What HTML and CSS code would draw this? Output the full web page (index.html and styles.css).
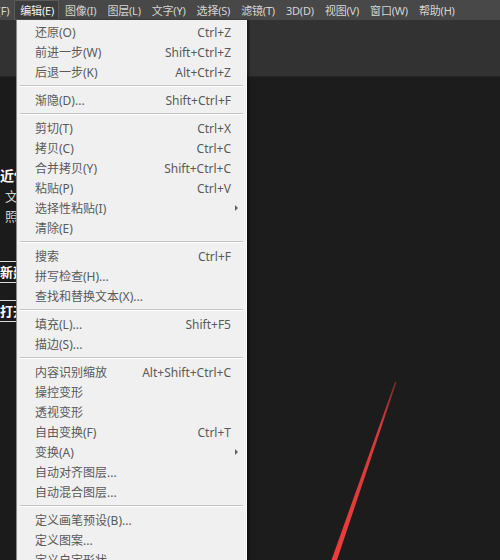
FILE: index.html
```html
<!DOCTYPE html>
<html lang="zh">
<head>
<meta charset="utf-8">
<link rel="stylesheet" href="styles.css">
</head>
<body>
<div class="app">
  <div class="menubar">
    <span class="mb-item cut">文件(F)</span>
    <span class="mb-item active">编辑(E)</span>
    <span class="mb-item">图像(I)</span>
    <span class="mb-item">图层(L)</span>
    <span class="mb-item">文字(Y)</span>
    <span class="mb-item">选择(S)</span>
    <span class="mb-item">滤镜(T)</span>
    <span class="mb-item">3D(D)</span>
    <span class="mb-item">视图(V)</span>
    <span class="mb-item">窗口(W)</span>
    <span class="mb-item">帮助(H)</span>
  </div>
  <div class="optbar"></div>
  <div class="work">
    <aside class="start">
      <div class="title">最近使用项</div>
      <div class="row">：文档</div>
      <div class="row">：照片</div>
      <div class="btn btn-new">新建...</div>
      <div class="btn btn-open">打开...</div>
    </aside>
    <main class="canvas">
      <svg class="stroke" viewBox="0 0 484 483" width="484" height="483">
        <defs>
          <linearGradient id="rg" x1="0" y1="0" x2="0" y2="1">
            <stop offset="0" stop-color="#7a2a2a"/>
            <stop offset="0.25" stop-color="#d83a3a"/>
            <stop offset="1" stop-color="#ef3b3b"/>
          </linearGradient>
        </defs>
        <polygon points="379,305 380.5,305 321,483 315.5,483" fill="url(#rg)"/>
      </svg>
    </main>
  </div>

  <div class="menu">
    <div class="mi"><span>还原(O)</span><span class="sc">Ctrl+Z</span></div>
    <div class="mi"><span>前进一步(W)</span><span class="sc">Shift+Ctrl+Z</span></div>
    <div class="mi"><span>后退一步(K)</span><span class="sc">Alt+Ctrl+Z</span></div>
    <div class="sep"></div>
    <div class="mi"><span>渐隐(D)...</span><span class="sc">Shift+Ctrl+F</span></div>
    <div class="sep"></div>
    <div class="mi"><span>剪切(T)</span><span class="sc">Ctrl+X</span></div>
    <div class="mi"><span>拷贝(C)</span><span class="sc">Ctrl+C</span></div>
    <div class="mi"><span>合并拷贝(Y)</span><span class="sc">Shift+Ctrl+C</span></div>
    <div class="mi"><span>粘贴(P)</span><span class="sc">Ctrl+V</span></div>
    <div class="mi sub"><span>选择性粘贴(I)</span></div>
    <div class="mi"><span>清除(E)</span></div>
    <div class="sep"></div>
    <div class="mi"><span>搜索</span><span class="sc">Ctrl+F</span></div>
    <div class="mi"><span>拼写检查(H)...</span></div>
    <div class="mi"><span>查找和替换文本(X)...</span></div>
    <div class="sep"></div>
    <div class="mi"><span>填充(L)...</span><span class="sc">Shift+F5</span></div>
    <div class="mi"><span>描边(S)...</span></div>
    <div class="sep"></div>
    <div class="mi"><span>内容识别缩放</span><span class="sc">Alt+Shift+Ctrl+C</span></div>
    <div class="mi"><span>操控变形</span></div>
    <div class="mi"><span>透视变形</span></div>
    <div class="mi"><span>自由变换(F)</span><span class="sc">Ctrl+T</span></div>
    <div class="mi sub"><span>变换(A)</span></div>
    <div class="mi"><span>自动对齐图层...</span></div>
    <div class="mi"><span>自动混合图层...</span></div>
    <div class="sep"></div>
    <div class="mi"><span>定义画笔预设(B)...</span></div>
    <div class="mi"><span>定义图案...</span></div>
    <div class="mi"><span>定义自定形状...</span></div>
  </div>
</div>
</body>
</html>
```
FILE: styles.css
```css
html, body {
  margin: 0;
  padding: 0;
  background: #1c1c1c;
}
.app {
  position: relative;
  width: 500px;
  height: 560px;
  overflow: hidden;
  font-family: "Noto Sans", "Noto Sans CJK SC", sans-serif;
  display: flex;
  flex-direction: column;
}
.menubar {
  height: 20px;
  background: #484848;
  display: flex;
  align-items: stretch;
  margin-left: -30px;
  flex-shrink: 0;
}
.mb-item {
  display: flex;
  align-items: center;
  padding: 0 5px 0 6px;
  color: #d4d4d4;
  font-size: 11px;
  white-space: nowrap;
  letter-spacing: -0.2px;
}
.mb-item.active {
  background: #3c3c3c;
  color: #f2f2f2;
  box-shadow: inset 0 0 0 1px #5a5a5a;
}
.optbar {
  height: 56px;
  background: #323232;
  border-bottom: 1px solid #262626;
  flex-shrink: 0;
}
.work {
  flex: 1;
  display: flex;
  min-height: 0;
}
.start {
  width: 16px;
  flex-shrink: 0;
  background: #1b1b1b;
  overflow: hidden;
  white-space: nowrap;
  padding-top: 89px;
}
.title {
  color: #ffffff;
  font-weight: bold;
  font-size: 14px;
  line-height: 20px;
  margin-left: -14px;
}
.row {
  color: #d0d0d0;
  font-size: 13px;
  line-height: 20px;
  margin-left: -8px;
}
.btn {
  box-sizing: border-box;
  width: 80px;
  height: 22px;
  border: 1px solid #d8d8d8;
  color: #ffffff;
  font-size: 13px;
  font-weight: bold;
  line-height: 20px;
  margin-left: -1px;
  background: #1b1b1b;
}
.btn-new { margin-top: 35px; }
.btn-open { margin-top: 17px; }
.canvas {
  flex: 1;
  position: relative;
  background: #1c1c1c;
}
.stroke {
  position: absolute;
  left: 0;
  top: 0;
  display: block;
}
.menu {
  position: absolute;
  left: 16px;
  top: 20px;
  width: 231px;
  height: 560px;
  background: #f0f0f0;
  border-left: 1px solid #8a8a8a;
  border-right: 1px solid #fafafa;
  box-shadow: 2px 0 2px rgba(0,0,0,0.5);
  padding-top: 2px;
  box-sizing: border-box;
  font-size: 12px;
  color: #5a5a5a;
}
.mi {
  height: 20px;
  display: flex;
  align-items: center;
  justify-content: space-between;
  padding: 0 15px 0 18px;
  position: relative;
  white-space: nowrap;
}
.sc {
  color: #5a5a5a;
}
.mi.sub::after {
  content: "";
  position: absolute;
  right: 8px;
  top: 7px;
  border-left: 3px solid #606060;
  border-top: 3px solid transparent;
  border-bottom: 3px solid transparent;
}
.sep {
  height: 8px;
  position: relative;
}
.sep::before {
  content: "";
  position: absolute;
  left: 3px;
  right: 3px;
  top: 3px;
  height: 1px;
  background: #c4c4c4;
  border-bottom: 1px solid #ffffff;
}
```
